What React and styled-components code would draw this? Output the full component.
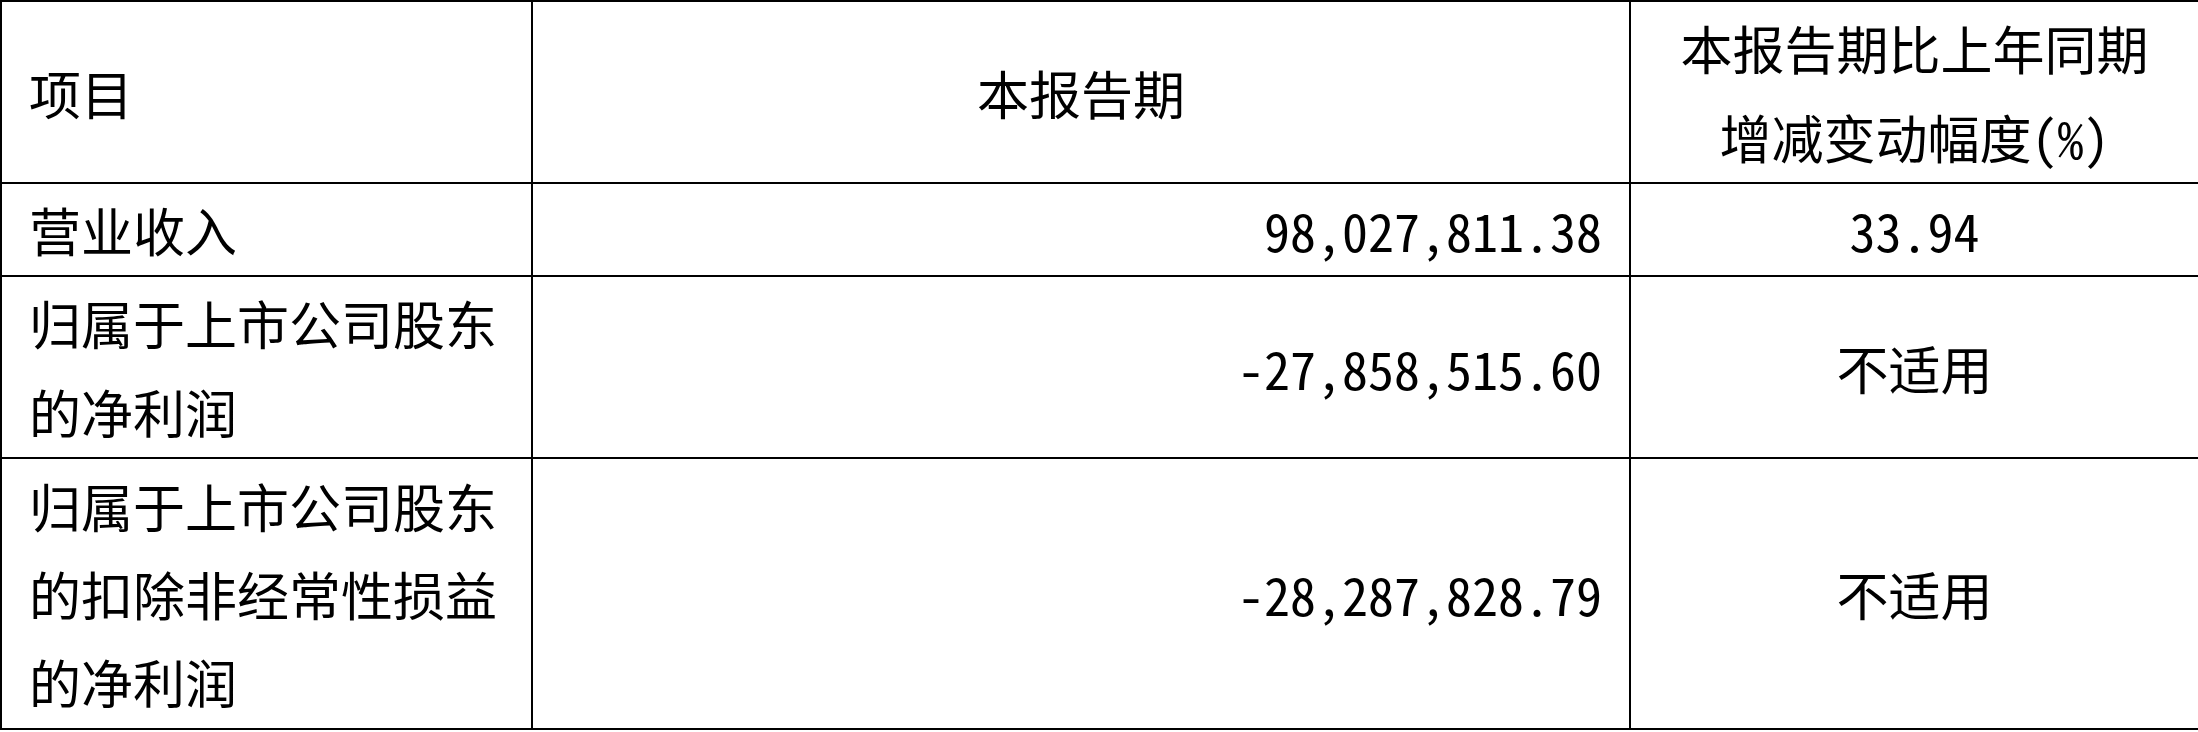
import React from 'react';
import styled, { createGlobalStyle } from 'styled-components';

const GlobalStyle = createGlobalStyle`
  html, body {
    margin: 0;
    padding: 0;
    background: #fff;
  }
`;

const Table = styled.table`
  width: 2198px;
  border-collapse: collapse;
  table-layout: fixed;
  font-family: "Noto Sans Mono CJK SC", "Noto Sans CJK SC", "Liberation Mono", monospace;
  font-size: 52px;
  font-weight: 300;
  color: #000;
`;

const Row = styled.tr`
  height: ${(p) => p.$h}px;
`;

const Cell = styled.td`
  border: 2px solid #000;
  padding: 0 27px;
  line-height: ${(p) => p.$lh || 89}px;
  vertical-align: middle;
  text-align: ${(p) => p.$align || 'left'};
  white-space: nowrap;
  overflow: hidden;
`;

const Line = styled.div`
  display: block;
`;

const rows = [
  { h: 93, label: ['营业收入'], amount: '98,027,811.38', change: '33.94' },
  { h: 182, label: ['归属于上市公司股东', '的净利润'], amount: '-27,858,515.60', change: '不适用' },
  {
    h: 271,
    lh: 88,
    label: ['归属于上市公司股东', '的扣除非经常性损益', '的净利润'],
    amount: '-28,287,828.79',
    change: '不适用',
  },
];

const Lines = ({ items }) => items.map((t) => <Line key={t}>{t}</Line>);

const App = () => {
  return (
    <>
      <GlobalStyle />
      <Table>
        <colgroup>
          <col style={{ width: 531 }} />
          <col style={{ width: 1098 }} />
          <col style={{ width: 569 }} />
        </colgroup>
        <tbody>
          <Row $h={182}>
            <Cell>项目</Cell>
            <Cell $align="center">本报告期</Cell>
            <Cell $align="center">
              <Lines items={['本报告期比上年同期', '增减变动幅度(%)']} />
            </Cell>
          </Row>
          {rows.map((r) => (
            <Row key={r.amount} $h={r.h}>
              <Cell $lh={r.lh}>
                <Lines items={r.label} />
              </Cell>
              <Cell $lh={r.lh} $align="right">{r.amount}</Cell>
              <Cell $lh={r.lh} $align="center">{r.change}</Cell>
            </Row>
          ))}
        </tbody>
      </Table>
    </>
  );
};

export default App;
